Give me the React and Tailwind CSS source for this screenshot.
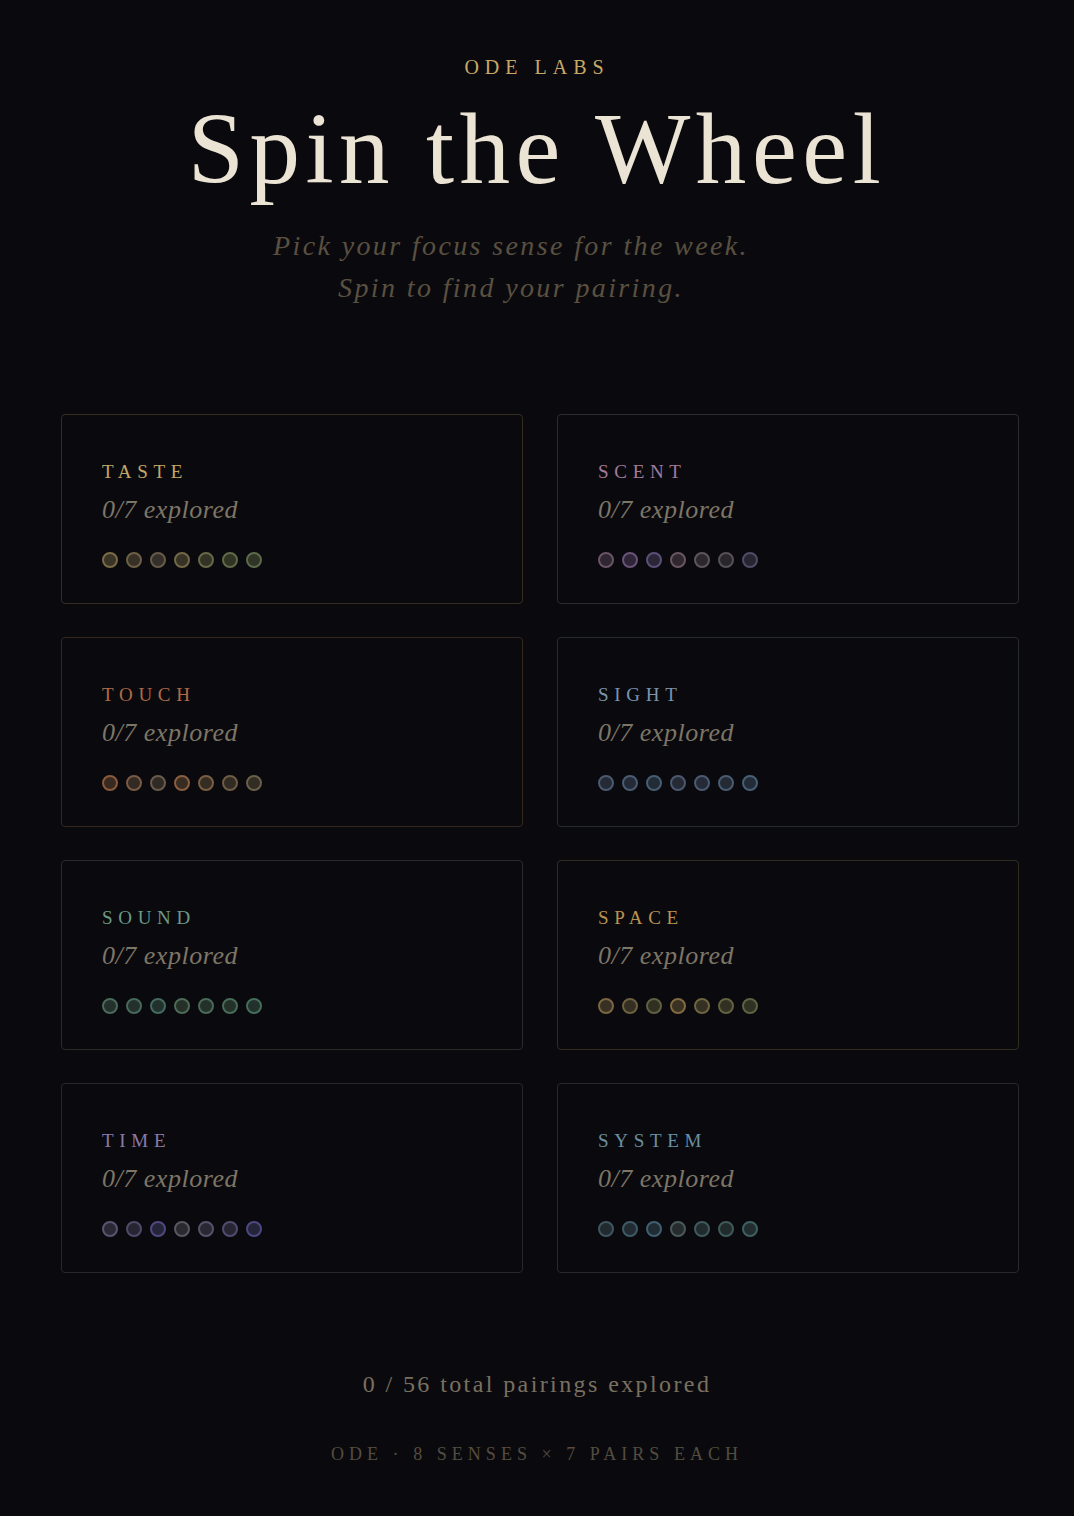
import React from 'react';

const senses = [
  {
    name: 'TASTE',
    label: 'text-[#c4a766]',
    border: 'border-[#342e22]',
    dots: [
      'border-[#7a6a45] bg-[#3a3426]',
      'border-[#6e5f45] bg-[#373027]',
      'border-[#675a4a] bg-[#352f29]',
      'border-[#726848] bg-[#363225]',
      'border-[#666848] bg-[#333325]',
      'border-[#5e6a48] bg-[#303424]',
      'border-[#5c6a4c] bg-[#2f3426]',
    ],
  },
  {
    name: 'SCENT',
    label: 'text-[#a47a9c]',
    border: 'border-[#2d2931]',
    dots: [
      'border-[#6a5468] bg-[#2e2630]',
      'border-[#6a5278] bg-[#2e2536]',
      'border-[#5a5078] bg-[#2a2636]',
      'border-[#6a5660] bg-[#2f282d]',
      'border-[#5e5460] bg-[#2b272d]',
      'border-[#565058] bg-[#29262b]',
      'border-[#504c66] bg-[#272532]',
    ],
  },
  {
    name: 'TOUCH',
    label: 'text-[#b06a45]',
    border: 'border-[#322820]',
    dots: [
      'border-[#8a5a3a] bg-[#382a21]',
      'border-[#7a5a44] bg-[#342a24]',
      'border-[#6a5a4a] bg-[#302a26]',
      'border-[#8a5e3e] bg-[#382b22]',
      'border-[#7a5e44] bg-[#352c24]',
      'border-[#6e5c44] bg-[#322b24]',
      'border-[#6a6048] bg-[#312d25]',
    ],
  },
  {
    name: 'SIGHT',
    label: 'text-[#7a94b0]',
    border: 'border-[#262a31]',
    dots: [
      'border-[#4a5a70] bg-[#252a35]',
      'border-[#4a5c74] bg-[#242a36]',
      'border-[#465e74] bg-[#232b35]',
      'border-[#4c5870] bg-[#262a35]',
      'border-[#4a5a72] bg-[#252a36]',
      'border-[#485c72] bg-[#242a34]',
      'border-[#466078] bg-[#232c36]',
    ],
  },
  {
    name: 'SOUND',
    label: 'text-[#6a9a86]',
    border: 'border-[#272c28]',
    dots: [
      'border-[#4a6a5a] bg-[#24302b]',
      'border-[#466a5a] bg-[#23302b]',
      'border-[#446a5e] bg-[#22312d]',
      'border-[#4c6a56] bg-[#253029]',
      'border-[#486a58] bg-[#24302a]',
      'border-[#466c58] bg-[#23312a]',
      'border-[#446e5a] bg-[#22312b]',
    ],
  },
  {
    name: 'SPACE',
    label: 'text-[#b8924e]',
    border: 'border-[#312c22]',
    dots: [
      'border-[#7a6640] bg-[#383022]',
      'border-[#6c6040] bg-[#342f22]',
      'border-[#5e6040] bg-[#303022]',
      'border-[#806a40] bg-[#393122]',
      'border-[#6e6440] bg-[#343022]',
      'border-[#626240] bg-[#313022]',
      'border-[#5a6440] bg-[#2f3122]',
    ],
  },
  {
    name: 'TIME',
    label: 'text-[#8a7aaa]',
    border: 'border-[#28272e]',
    dots: [
      'border-[#5a5470] bg-[#2a2834]',
      'border-[#4e4a68] bg-[#272532]',
      'border-[#4e4a80] bg-[#262438]',
      'border-[#5a5662] bg-[#2a2930]',
      'border-[#56526a] bg-[#292732]',
      'border-[#504c70] bg-[#272534]',
      'border-[#4c4880] bg-[#252438]',
    ],
  },
  {
    name: 'SYSTEM',
    label: 'text-[#6a90a0]',
    border: 'border-[#272a2d]',
    dots: [
      'border-[#3e5660] bg-[#212a2f]',
      'border-[#3e5a66] bg-[#212b31]',
      'border-[#3e6070] bg-[#202c34]',
      'border-[#4a5a58] bg-[#262b2b]',
      'border-[#3e5a5c] bg-[#212b2d]',
      'border-[#3e5a5a] bg-[#212b2c]',
      'border-[#3e6060] bg-[#212d2e]',
    ],
  },
];

function SenseCard({ sense }) {
  return (
    <div className={`h-[190px] rounded-[4px] border ${sense.border} pl-10 pt-[46px]`}>
      <div className={`text-[19px] leading-[22px] tracking-[0.3em] ${sense.label}`}>{sense.name}</div>
      <div className="mt-[12px] text-[26px] italic leading-[30px] tracking-[0.02em] text-[#7d7566]">
        0/7 explored
      </div>
      <div className="mt-[27px] flex gap-2">
        {sense.dots.map((d, i) => (
          <span key={i} className={`block h-4 w-4 rounded-full border-2 ${d}`} />
        ))}
      </div>
    </div>
  );
}

export default function App() {
  return (
    <div
      className="min-h-[1516px] bg-[#0a0a0e] pb-12"
      style={{ fontFamily: '"Liberation Serif", "Times New Roman", serif' }}
    >
      <header className="flex flex-col items-center pt-[54px] text-center">
        <div className="text-[20px] leading-[26px] tracking-[0.3em] text-[#c8a864]">ODE LABS</div>
        <h1 className="mt-[14px] text-[101px] leading-[110px] tracking-[0.055em] text-[#ebe3d3]">
          Spin the Wheel
        </h1>
        <p className="mr-[52px] mt-[21px] text-[28px] italic leading-[42px] tracking-[0.085em] text-[#5a5040]">
          Pick your focus sense for the week.
          <br />
          Spin to find your pairing.
        </p>
      </header>

      <main className="mt-[105px] grid grid-cols-2 gap-x-[34px] gap-y-[33px] pl-[61px] pr-[55px]">
        {senses.map((s) => (
          <SenseCard key={s.name} sense={s} />
        ))}
      </main>

      <footer className="mt-[96px] flex flex-col items-center text-center">
        <div className="text-[24px] leading-[30px] tracking-[0.1em] text-[#7a7060]">
          0 / 56 total pairings explored
        </div>
        <div className="mt-[44px] text-[18px] leading-[22px] tracking-[0.28em] text-[#544c3f]">
          ODE · 8 SENSES × 7 PAIRS EACH
        </div>
      </footer>
    </div>
  );
}
